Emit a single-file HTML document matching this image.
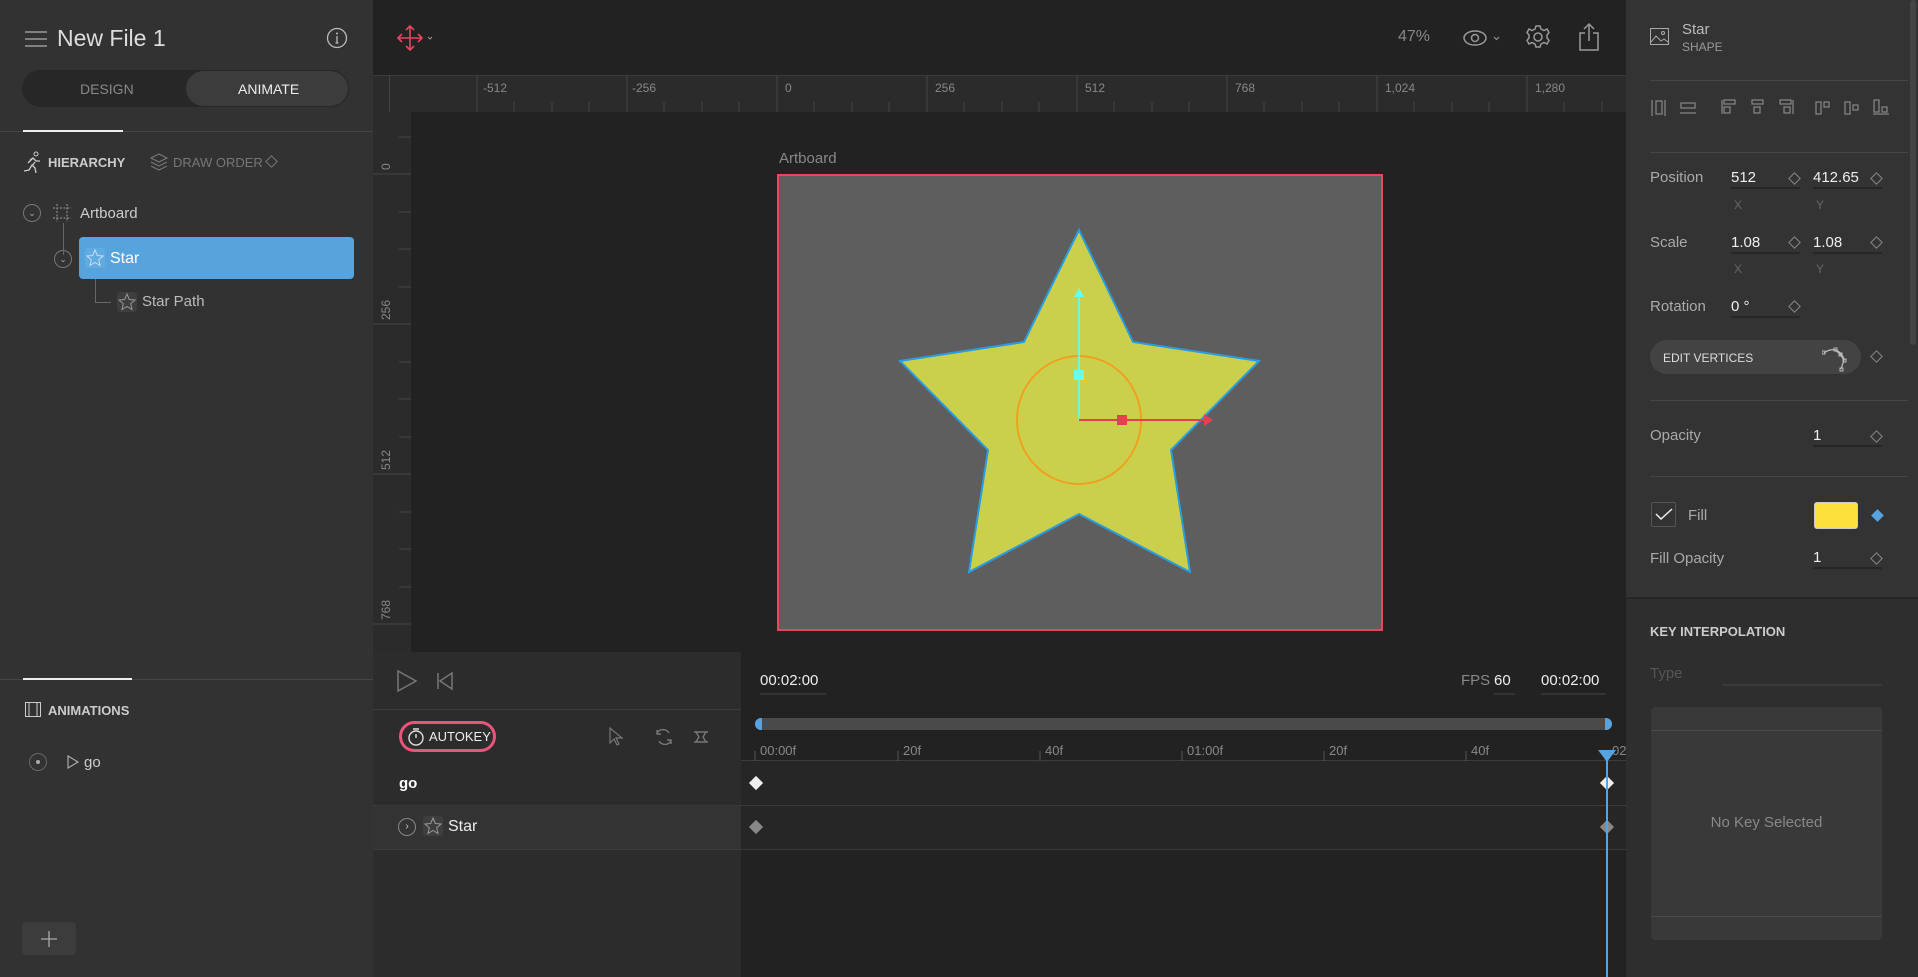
<!DOCTYPE html>
<html><head><meta charset="utf-8"><style>
*{box-sizing:border-box;margin:0;padding:0}
body{width:1918px;height:977px;overflow:hidden;background:#222;font-family:"Liberation Sans",sans-serif;color:#ccc;position:relative}
.a{position:absolute;white-space:nowrap}
.lp{position:absolute;left:0;top:0;width:373px;height:977px;background:#323232}
.rp{position:absolute;left:1626px;top:0;width:292px;height:977px;background:#333}
.t{font-size:15px;color:#aaa}
.inp{position:absolute;border-bottom:2px solid #262626;height:24px;font-size:15px;color:#eee;padding-top:4px}
.dia{position:absolute;width:9px;height:9px;border:1px solid #888;transform:rotate(45deg)}
.hl{position:absolute;height:1px;background:#444}
</style></head><body>
<div class="a" style="left:373px;top:0;width:1253px;height:75px;background:#222"></div>
<svg class="a" style="left:396px;top:24px" width="40" height="28" viewBox="0 0 40 28"><g stroke="#e8455f" stroke-width="1.6" fill="none"><path d="M14 2v24M2 14h24M10 6l4-4 4 4M10 22l4 4 4-4M6 10l-4 4 4 4M22 10l4 4-4 4"/></g><path d="M32 13l2 2 2-2" stroke="#999" fill="none"/></svg>
<div class="a" style="left:1398px;top:28px;font-size:16px;color:#888">47%</div>
<svg class="a" style="left:1462px;top:26px" width="44" height="24"><ellipse cx="13" cy="12" rx="11" ry="7" stroke="#999" fill="none" stroke-width="1.5"/><circle cx="13" cy="12" r="3.5" stroke="#999" fill="none" stroke-width="1.5"/><path d="M32 11l2.5 2.5 2.5-2.5" stroke="#999" fill="none"/></svg>
<svg class="a" style="left:1525px;top:24px" width="26" height="26" viewBox="0 0 26 26"><circle cx="13" cy="13" r="4" stroke="#999" fill="none" stroke-width="1.5"/><path d="M11 2h4l1 3 3 1.5 3-1.5 2 3.5-2 2.5v3l2 2.5-2 3.5-3-1.5-3 1.5-1 3h-4l-1-3-3-1.5-3 1.5-2-3.5 2-2.5v-3l-2-2.5 2-3.5 3 1.5 3-1.5z" stroke="#999" fill="none" stroke-width="1.5"/></svg>
<svg class="a" style="left:1578px;top:22px" width="22" height="30"><path d="M11 2v17M6 7l5-5 5 5M7 11H2v17h18V11h-5" stroke="#999" fill="none" stroke-width="1.5"/></svg>
<div class="a" style="left:373px;top:75px;width:1253px;height:37px;background:#2b2b2b;border-top:1px solid #3a3a3a"></div>
<div class="a" style="left:373px;top:112px;width:38px;height:540px;background:#2b2b2b"></div>
<div class="a" style="left:389px;top:75px;width:1px;height:37px;background:#444"></div>
<svg class="a" style="left:411px;top:76px" width="1215" height="36">
<g stroke="#444">
<path d="M66 0v36M216 0v36M366 0v36M516 0v36M666 0v36M816 0v36M966 0v36M1116 0v36"/>
<path d="M103 26v10M141 26v10M178 26v10M253 26v10M291 26v10M328 26v10M403 26v10M441 26v10M478 26v10M553 26v10M591 26v10M628 26v10M703 26v10M741 26v10M778 26v10M853 26v10M891 26v10M928 26v10M1003 26v10M1041 26v10M1078 26v10M1153 26v10M1191 26v10"/>
</g>
<g fill="#888" font-size="12" font-family="Liberation Sans"><text x="72" y="16">-512</text><text x="221" y="16">-256</text><text x="374" y="16">0</text><text x="524" y="16">256</text><text x="674" y="16">512</text><text x="824" y="16">768</text><text x="974" y="16">1,024</text><text x="1124" y="16">1,280</text></g>
</svg>
<svg class="a" style="left:373px;top:112px" width="38" height="540">
<g stroke="#444"><path d="M0 62h38M0 212h38M0 362h38M0 512h38M26 25h12M26 100h12M26 137h12M26 175h12M26 250h12M26 287h12M26 325h12M26 400h12M26 437h12M26 475h12"/></g>
<g fill="#888" font-size="12" font-family="Liberation Sans"><text transform="translate(17,58) rotate(-90)">0</text><text transform="translate(17,208) rotate(-90)">256</text><text transform="translate(17,358) rotate(-90)">512</text><text transform="translate(17,508) rotate(-90)">768</text></g>
</svg>
<div class="a" style="left:779px;top:150px;font-size:15px;color:#888">Artboard</div>
<div class="a" style="left:777px;top:174px;width:606px;height:457px;background:#5e5e5e;border:2px solid #e8455f"></div>
<svg class="a" style="left:777px;top:174px" width="606" height="457">
<g transform="translate(-777,-174)">
<polygon points="1079,230 1133,342 1259,361 1171,450 1190,572 1079,514 969,572 988,450 900,361 1024,342" fill="#cbd04c" stroke="#2a9de0" stroke-width="2"/>
<ellipse cx="1079" cy="420" rx="62" ry="64" fill="none" stroke="#f0a020" stroke-width="2"/>
<path d="M1079 420V296" stroke="#6fe" stroke-width="1.5"/><polygon points="1074,297 1079,288 1084,297" fill="#6fe"/>
<rect x="1074" y="370" width="10" height="10" fill="#6fe"/>
<path d="M1079 420H1205" stroke="#e83f4f" stroke-width="2"/><polygon points="1204,414 1213,420 1204,426" fill="#e83f4f"/>
<rect x="1117" y="415" width="10" height="10" fill="#e83f4f"/>
</g></svg>
<div class="a" style="left:373px;top:652px;width:1253px;height:325px;background:#222"></div>
<div class="a" style="left:373px;top:652px;width:368px;height:325px;background:#2c2c2c"></div>
<div class="hl" style="left:373px;top:709px;width:1253px;background:#3c3c3c"></div>
<svg class="a" style="left:396px;top:669px" width="60" height="24"><path d="M2 2l18 10-18 10z" fill="none" stroke="#777" stroke-width="1.5"/><path d="M42 4v16M56 4l-12 8 12 8z" fill="none" stroke="#777" stroke-width="1.5"/></svg>
<div class="a" style="left:760px;top:672px;font-size:15px;color:#eee;border-bottom:2px solid #333;padding-bottom:4px;width:66px">00:02:00</div>
<div class="a" style="left:1461px;top:672px;font-size:15px;color:#888">FPS</div>
<div class="a" style="left:1494px;top:672px;font-size:15px;color:#eee;border-bottom:2px solid #333;padding-bottom:4px;width:21px">60</div>
<div class="a" style="left:1541px;top:672px;font-size:15px;color:#eee;border-bottom:2px solid #333;padding-bottom:4px;width:65px">00:02:00</div>
<div class="a" style="left:399px;top:721px;width:97px;height:31px;border:3px solid #e8557a;border-radius:16px;background:#2c2c2c"></div>
<svg class="a" style="left:407px;top:727px" width="18" height="20"><circle cx="9" cy="11" r="7" fill="none" stroke="#ddd" stroke-width="1.4"/><path d="M9 11V7M6 2h6" stroke="#ddd" stroke-width="1.4"/></svg>
<div class="a" style="left:429px;top:729px;font-size:13px;color:#eee">AUTOKEY</div>
<svg class="a" style="left:608px;top:726px" width="100" height="22"><path d="M2 2l0 15 4-4 3 6 2-1-3-6h6z" fill="none" stroke="#777" stroke-width="1.2"/><path d="M49 7a7 7 0 0 1 12 0M49 4v4h4M63 15a7 7 0 0 1-12 0M63 18v-4h-4" fill="none" stroke="#777" stroke-width="1.4"/><path d="M86 6h14M86 16h14M88 6l3 5-3 5M98 6l-3 5 3 5" fill="none" stroke="#777" stroke-width="1.4"/></svg>
<div class="a" style="left:741px;top:709px;width:885px;height:52px;background:#222"></div>
<div class="a" style="left:755px;top:718px;width:857px;height:12px;background:#4a4a4a;border-radius:6px"></div>
<div class="a" style="left:755px;top:718px;width:7px;height:12px;background:#57a3e0;border-radius:6px 0 0 6px"></div>
<div class="a" style="left:1605px;top:718px;width:7px;height:12px;background:#57a3e0;border-radius:0 6px 6px 0"></div>
<svg class="a" style="left:741px;top:735px" width="885" height="27"><g stroke="#555"><path d="M14 16v10M157 16v10M299 16v10M441 16v10M583 16v10M725 16v10"/><path d="M0 26h885"/></g><g fill="#888" font-size="13" font-family="Liberation Sans"><text x="19" y="20">00:00f</text><text x="162" y="20">20f</text><text x="304" y="20">40f</text><text x="446" y="20">01:00f</text><text x="588" y="20">20f</text><text x="730" y="20">40f</text><text x="871" y="20">02</text></g></svg>
<div class="a" style="left:373px;top:761px;width:1253px;height:44px;background:#2c2c2c"></div>
<div class="a" style="left:741px;top:761px;width:885px;height:44px;background:#262626"></div>
<div class="a" style="left:399px;top:775px;font-size:15px;font-weight:bold;color:#fff">go</div>
<div class="hl" style="left:373px;top:805px;width:1253px;background:#3a3a3a"></div>
<div class="a" style="left:373px;top:806px;width:368px;height:43px;background:#333"></div>
<div class="a" style="left:741px;top:806px;width:885px;height:43px;background:#262626"></div>
<div class="hl" style="left:373px;top:849px;width:1253px;background:#3a3a3a"></div>
<div class="a" style="left:398px;top:818px;width:18px;height:18px;border:1px solid #888;border-radius:50%;font-size:10px;color:#ccc;text-align:center;line-height:16px">›</div>
<svg class="a" style="left:423px;top:816px" width="20" height="20"><rect width="20" height="20" rx="3" fill="#3e3e3e"/><polygon points="10,2 12.3,7.5 18,8 13.7,11.8 15,17.5 10,14.5 5,17.5 6.3,11.8 2,8 7.7,7.5" fill="none" stroke="#999" stroke-width="1"/></svg>
<div class="a" style="left:448px;top:818px;font-size:16px;color:#eee">Star</div>
<div class="a" style="left:751px;top:778px;width:10px;height:10px;background:#eee;transform:rotate(45deg)"></div>
<div class="a" style="left:1602px;top:778px;width:10px;height:10px;background:#eee;transform:rotate(45deg)"></div>
<div class="a" style="left:751px;top:822px;width:10px;height:10px;background:#888;transform:rotate(45deg)"></div>
<div class="a" style="left:1602px;top:822px;width:10px;height:10px;background:#888;transform:rotate(45deg)"></div>
<div class="a" style="left:1606px;top:760px;width:2px;height:217px;background:#57a3e0"></div>
<svg class="a" style="left:1598px;top:750px" width="18" height="12"><polygon points="0,0 18,0 9,12" fill="#57a3e0"/></svg>
<div class="lp"></div>
<svg class="a" style="left:25px;top:31px" width="22" height="16"><path d="M0 1h22M0 8h22M0 15h22" stroke="#999" stroke-width="1.5"/></svg>
<div class="a" style="left:57px;top:25px;font-size:23px;color:#ddd">New File 1</div>
<svg class="a" style="left:326px;top:27px" width="22" height="22"><circle cx="11" cy="11" r="9.5" fill="none" stroke="#bbb" stroke-width="1.3"/><path d="M11 9v7M9.5 16h3" stroke="#bbb" stroke-width="1.3"/><circle cx="11" cy="6.5" r="1" fill="#bbb"/></svg>
<div class="a" style="left:22px;top:70px;width:327px;height:37px;background:#272727;border-radius:19px"></div>
<div class="a" style="left:186px;top:71px;width:162px;height:35px;background:#3c3c3c;border-radius:18px"></div>
<div class="a" style="left:80px;top:81px;font-size:14px;color:#888">DESIGN</div>
<div class="a" style="left:238px;top:81px;font-size:14px;color:#eee">ANIMATE</div>
<div class="hl" style="left:0;top:131px;width:373px;background:#454545"></div>
<div class="a" style="left:23px;top:130px;width:100px;height:2px;background:#eee"></div>
<svg class="a" style="left:22px;top:151px" width="22" height="22"><circle cx="14" cy="3" r="2" fill="none" stroke="#ccc"/><path d="M2 20l5-1 3-5 3 3 1 5M8 9l3-2 3 3 4 0M6 12l5-5M13 11l-3 4" stroke="#ccc" fill="none" stroke-width="1.3"/></svg>
<div class="a" style="left:48px;top:155px;font-size:13px;font-weight:bold;color:#ccc">HIERARCHY</div>
<svg class="a" style="left:149px;top:152px" width="20" height="20"><path d="M10 2l8 4-8 4-8-4z M2 10l8 4 8-4 M2 14l8 4 8-4" fill="none" stroke="#777" stroke-width="1.2"/></svg>
<div class="a" style="left:173px;top:155px;font-size:13px;color:#777">DRAW ORDER</div>
<div class="dia" style="left:267px;top:157px;border-color:#777"></div>
<div class="a" style="left:23px;top:204px;width:18px;height:18px;border:1px solid #777;border-radius:50%;font-size:9px;color:#aaa;text-align:center;line-height:16px">⌄</div>
<svg class="a" style="left:53px;top:204px" width="18" height="18"><path d="M4 0v18M14 0v18M0 4h18M0 14h18" stroke="#999" stroke-dasharray="2 1.5" fill="none"/></svg>
<div class="a" style="left:80px;top:205px;font-size:15px;color:#ccc">Artboard</div>
<div class="a" style="left:63px;top:223px;width:1px;height:32px;background:#666"></div>
<div class="a" style="left:54px;top:250px;width:18px;height:18px;border:1px solid #777;border-radius:50%;font-size:9px;color:#aaa;text-align:center;line-height:16px">⌄</div>
<div class="a" style="left:79px;top:237px;width:275px;height:42px;background:#57a3dc;border-radius:4px"></div>
<svg class="a" style="left:85px;top:248px" width="20" height="20"><rect width="20" height="20" rx="3" fill="#5fabe2"/><polygon points="10,2 12.3,7.5 18,8 13.7,11.8 15,17.5 10,14.5 5,17.5 6.3,11.8 2,8 7.7,7.5" fill="none" stroke="#cde" stroke-width="1"/></svg>
<div class="a" style="left:110px;top:250px;font-size:16px;color:#fff">Star</div>
<div class="a" style="left:95px;top:279px;width:1px;height:23px;background:#666"></div>
<div class="a" style="left:95px;top:302px;width:16px;height:1px;background:#666"></div>
<svg class="a" style="left:117px;top:292px" width="20" height="20"><rect width="20" height="20" rx="3" fill="#3e3e3e"/><polygon points="10,2 12.3,7.5 18,8 13.7,11.8 15,17.5 10,14.5 5,17.5 6.3,11.8 2,8 7.7,7.5" fill="none" stroke="#999" stroke-width="1"/></svg>
<div class="a" style="left:142px;top:293px;font-size:15px;color:#bbb">Star Path</div>
<div class="hl" style="left:0;top:679px;width:373px;background:#454545"></div>
<div class="a" style="left:23px;top:678px;width:109px;height:2px;background:#eee"></div>
<svg class="a" style="left:25px;top:702px" width="16" height="15"><rect x="0.5" y="0.5" width="15" height="14" fill="none" stroke="#ccc"/><path d="M4 1v13M12 1v13" stroke="#ccc"/></svg>
<div class="a" style="left:48px;top:703px;font-size:13px;font-weight:bold;color:#ccc">ANIMATIONS</div>
<div class="a" style="left:29px;top:753px;width:18px;height:18px;border:1px solid #666;border-radius:50%"></div>
<div class="a" style="left:36px;top:760px;width:4px;height:4px;border-radius:50%;background:#aaa"></div>
<svg class="a" style="left:67px;top:755px" width="12" height="14"><path d="M1 1l10 6-10 6z" fill="none" stroke="#aaa" stroke-width="1.2"/></svg>
<div class="a" style="left:84px;top:754px;font-size:15px;color:#ccc">go</div>
<div class="a" style="left:22px;top:922px;width:54px;height:33px;background:#3c3c3c;border-radius:4px"></div>
<svg class="a" style="left:41px;top:931px" width="16" height="16"><path d="M8 0v16M0 8h16" stroke="#aaa" stroke-width="1.3"/></svg>
<div class="rp"></div>
<div class="a" style="left:1626px;top:597px;width:292px;height:380px;background:#2e2e2e;border-top:2px solid #262626"></div>
<div class="a" style="left:1910px;top:0;width:6px;height:345px;background:#444;border-radius:3px"></div>
<svg class="a" style="left:1650px;top:28px" width="19" height="17"><rect x="0.5" y="0.5" width="18" height="16" fill="none" stroke="#aaa"/><path d="M1 14l5-6 5 5 3-2 4 3" fill="none" stroke="#aaa"/><circle cx="13" cy="5" r="1.5" fill="none" stroke="#aaa"/></svg>
<div class="a" style="left:1682px;top:21px;font-size:15px;color:#bbb">Star</div>
<div class="a" style="left:1682px;top:40px;font-size:12px;color:#999">SHAPE</div>
<div class="hl" style="left:1650px;top:80px;width:258px;background:#454545"></div>
<svg class="a" style="left:1651px;top:99px" width="240" height="20"><g fill="none" stroke="#888" stroke-width="1.2"><rect x="5" y="2" width="6" height="13"/><path d="M1 1v16M14 1v16"/><rect x="30" y="4" width="14" height="5"/><path d="M29 14h16"/><rect x="73" y="1" width="11" height="4"/><rect x="73" y="8" width="6" height="6"/><path d="M71 1v14"/><rect x="101" y="1" width="11" height="4"/><rect x="103" y="8" width="6" height="6"/><rect x="129" y="1" width="11" height="4"/><rect x="133" y="8" width="6" height="6"/><path d="M142 1v14"/><rect x="165" y="3" width="5" height="12"/><rect x="173" y="3" width="5" height="5"/><rect x="194" y="3" width="5" height="12"/><rect x="202" y="6" width="5" height="5"/><rect x="223" y="1" width="5" height="12"/><rect x="231" y="8" width="5" height="5"/><path d="M222 15h16"/></g></svg>
<div class="hl" style="left:1650px;top:152px;width:258px;background:#454545"></div>
<div class="a t" style="left:1650px;top:169px">Position</div>
<div class="inp" style="left:1731px;top:165px;width:69px">512</div><div class="dia" style="left:1790px;top:174px"></div>
<div class="inp" style="left:1813px;top:165px;width:69px">412.65</div><div class="dia" style="left:1872px;top:174px"></div>
<div class="a" style="left:1734px;top:198px;font-size:12px;color:#666">X</div><div class="a" style="left:1816px;top:198px;font-size:12px;color:#666">Y</div>
<div class="a t" style="left:1650px;top:234px">Scale</div>
<div class="inp" style="left:1731px;top:230px;width:69px">1.08</div><div class="dia" style="left:1790px;top:238px"></div>
<div class="inp" style="left:1813px;top:230px;width:69px">1.08</div><div class="dia" style="left:1872px;top:238px"></div>
<div class="a" style="left:1734px;top:262px;font-size:12px;color:#666">X</div><div class="a" style="left:1816px;top:262px;font-size:12px;color:#666">Y</div>
<div class="a t" style="left:1650px;top:298px">Rotation</div>
<div class="inp" style="left:1731px;top:294px;width:69px">0 °</div><div class="dia" style="left:1790px;top:302px"></div>
<div class="a" style="left:1650px;top:340px;width:211px;height:34px;background:#434343;border-radius:17px"></div>
<div class="a" style="left:1663px;top:351px;font-size:12px;color:#ddd">EDIT VERTICES</div>
<svg class="a" style="left:1822px;top:344px" width="28" height="28"><path d="M2 9c8-6 16-4 20 6M13 6l5 4 4 6-3 9" fill="none" stroke="#bbb" stroke-width="1.2"/><rect x="0" y="7" width="3" height="3" fill="none" stroke="#bbb"/><rect x="12" y="4" width="3" height="3" fill="none" stroke="#bbb"/><rect x="17" y="9" width="3" height="3" fill="none" stroke="#bbb"/><rect x="21" y="15" width="3" height="3" fill="none" stroke="#bbb"/><rect x="18" y="24" width="3" height="3" fill="none" stroke="#bbb"/></svg>
<div class="dia" style="left:1872px;top:352px"></div>
<div class="hl" style="left:1650px;top:400px;width:258px;background:#454545"></div>
<div class="a t" style="left:1650px;top:427px">Opacity</div>
<div class="inp" style="left:1813px;top:423px;width:69px">1</div><div class="dia" style="left:1872px;top:432px"></div>
<div class="hl" style="left:1650px;top:476px;width:258px;background:#454545"></div>
<div class="a" style="left:1651px;top:502px;width:25px;height:25px;border:1px solid #555;border-radius:2px"></div>
<svg class="a" style="left:1655px;top:507px" width="18" height="14"><path d="M1 7l5 5 11-10" fill="none" stroke="#eee" stroke-width="1.5"/></svg>
<div class="a t" style="left:1688px;top:507px">Fill</div>
<div class="a" style="left:1814px;top:502px;width:44px;height:27px;background:#fde13a;border-radius:3px;border:1px solid #ccc"></div>
<div class="a" style="left:1873px;top:511px;width:9px;height:9px;background:#57a3e0;transform:rotate(45deg)"></div>
<div class="a t" style="left:1650px;top:550px">Fill Opacity</div>
<div class="inp" style="left:1813px;top:545px;width:69px">1</div><div class="dia" style="left:1872px;top:554px"></div>
<div class="a" style="left:1650px;top:624px;font-size:13px;font-weight:bold;color:#ccc">KEY INTERPOLATION</div>
<div class="a" style="left:1650px;top:665px;font-size:15px;color:#555">Type</div>
<div class="a" style="left:1722px;top:684px;width:160px;height:2px;background:#393939"></div>
<div class="a" style="left:1651px;top:707px;width:231px;height:233px;background:#393939;border-radius:4px"></div>
<div class="hl" style="left:1651px;top:730px;width:231px;background:#4a4a4a"></div>
<div class="hl" style="left:1651px;top:916px;width:231px;background:#4a4a4a"></div>
<div class="a" style="left:1651px;top:814px;width:231px;text-align:center;font-size:15px;color:#888">No Key Selected</div>
</body></html>
